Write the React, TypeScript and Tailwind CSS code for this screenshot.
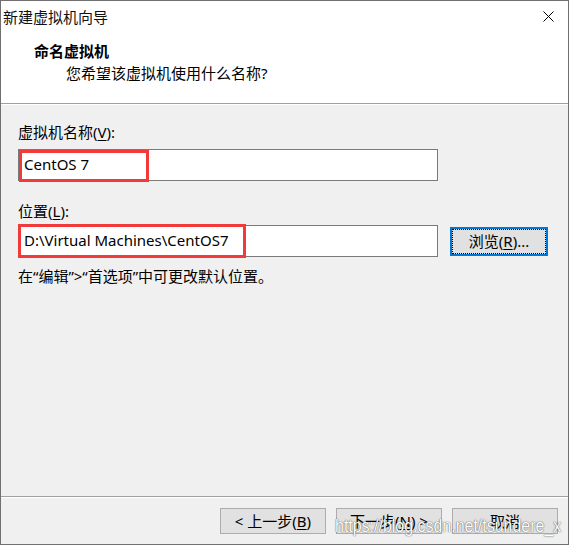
import React from "react";

const cjk = "font-['Noto_Sans','Noto_Sans_CJK_SC',sans-serif]";

function Key({ k }: { k: string }) {
  return <span className="underline underline-offset-2">{k}</span>;
}

function WinButton({ children, className = "" }: { children: React.ReactNode; className?: string }) {
  return (
    <div
      className={`w-[106px] h-[26px] border border-[#adadad] bg-[#e1e1e1] flex items-center justify-center text-[15px] leading-[20px] text-black ${className}`}
    >
      {children}
    </div>
  );
}

export default function App() {
  return (
    <div className={`w-[570px] h-[545px] bg-white ${cjk}`}>
      <div className="w-[569px] h-[545px] border border-[#707070] flex flex-col">
        {/* header */}
        <div className="bg-white border-b border-[#a0a0a0]">
          <div className="h-[31px] flex items-center justify-between pl-[2px] pr-[14px]">
            <span className="text-[15px] leading-[20px] text-[#111]">新建虚拟机向导</span>
            <svg width="11" height="11" viewBox="0 0 11 11" className="block">
              <path d="M0.5 0.5L10.5 10.5M10.5 0.5L0.5 10.5" stroke="#000" strokeWidth="1" fill="none" />
            </svg>
          </div>
          <div className="pt-[9px] pb-[20px]">
            <div className="pl-[33px] text-[15px] leading-[20px] font-bold text-black">命名虚拟机</div>
            <div className="pl-[65px] mt-[2px] text-[15px] leading-[20px] text-black">您希望该虚拟机使用什么名称?</div>
          </div>
        </div>
        <div className="h-px bg-white" />

        {/* body */}
        <div className="flex-1 bg-[#f0f0f0] pl-[17px] text-black">
          <div className="mt-[17px] text-[15px] leading-[20px]">
            虚拟机名称(<Key k="V" />):
          </div>
          <div className="relative mt-[7px] w-[420px] h-[32px] border border-[#7a7a7a] bg-white flex items-center pl-[5px] pb-[3px] text-[15px] leading-[20px]">
            CentOS 7
            <div className="absolute left-0 top-0 w-[130px] h-[32px] border-[3px] border-[#f23a3a] pointer-events-none" />
          </div>

          <div className="mt-[20px] text-[15px] leading-[20px]">
            位置(<Key k="L" />):
          </div>
          <div className="mt-[4px] flex items-center gap-[12px]">
            <div className="relative w-[420px] h-[32px] border border-[#7a7a7a] bg-white flex items-center pl-[5px] pb-[3px] text-[15px] leading-[20px]">
              D:\Virtual Machines\CentOS7
              <div className="absolute left-[-1px] top-[-2px] w-[228px] h-[34px] border-[3px] border-[#f23a3a] pointer-events-none" />
            </div>
            <div className="relative w-[98px] h-[29px] border-2 border-[#0078d7] bg-[#e1e1e1] flex items-center justify-center text-[15px] leading-[20px]">
              浏览(<Key k="R" />)...
              <div className="absolute inset-[0px] border border-dotted border-black pointer-events-none" />
            </div>
          </div>

          <div className="mt-[9px] text-[15px] leading-[20px]">在“编辑”&gt;“首选项”中可更改默认位置。</div>
        </div>

        {/* footer */}
        <div className="relative h-[48px] bg-[#f0f0f0] border-t border-[#a0a0a0]">
          <div className="h-px bg-white" />
          <div className="flex justify-end gap-[10px] pt-[10px] pr-[10px]">
            <WinButton>
              &lt; 上一步(<Key k="B" />)
            </WinButton>
            <WinButton>
              下一步(<Key k="N" />) &gt;
            </WinButton>
            <WinButton>取消</WinButton>
          </div>
          <div className="absolute left-[334px] top-[19px] origin-left scale-x-[0.84] whitespace-nowrap font-['Liberation_Sans',Arial,sans-serif] text-[19px] leading-none text-white [text-shadow:0_0_1px_rgba(0,0,0,0.7),0_0_2px_rgba(0,0,0,0.35)] pointer-events-none">
            https://blog.csdn.net/tsundere_x
          </div>
        </div>
      </div>
    </div>
  );
}
